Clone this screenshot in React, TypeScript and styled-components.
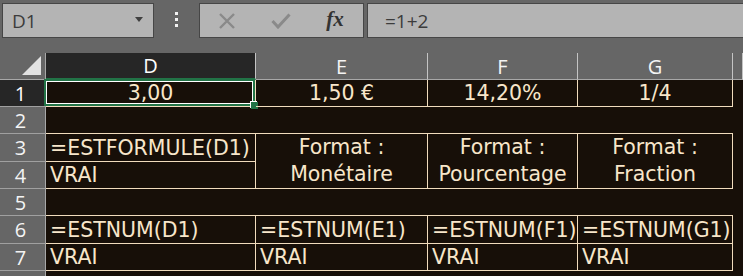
import styled, { createGlobalStyle, css } from "styled-components"

const GlobalStyle = createGlobalStyle`
  html, body {
    margin: 0;
    padding: 0;
    background: #666666;
  }
  body {
    width: 743px;
    height: 276px;
    overflow: hidden;
  }
`

const Window = styled.div`
  width: 743px;
  height: 276px;
  overflow: hidden;
  background: #666666;
  display: flex;
  flex-direction: column;
`

const FormulaBar = styled.div`
  height: 53px;
  flex: none;
  display: flex;
  align-items: flex-start;
  padding: 3px 0 0 2px;
  box-sizing: border-box;
`

const Box = styled.div`
  height: 35px;
  box-sizing: border-box;
  background: #b4b4b4;
  border: 1px solid #464646;
  display: flex;
  align-items: center;
  font-family: "Open Sans", "Liberation Sans", sans-serif;
  font-size: 19px;
  color: #3c3c3c;
`

const NameBox = styled(Box)`
  width: 152px;
  flex: none;
  padding: 0 10px 0 9px;
  justify-content: space-between;
`

const Caret = styled.span`
  width: 0;
  height: 0;
  border-left: 4px solid transparent;
  border-right: 4px solid transparent;
  border-top: 5px solid #404040;
  margin-top: -3px;
`

const Grip = styled.div`
  width: 45px;
  flex: none;
  display: flex;
  flex-direction: column;
  align-items: center;
  gap: 3px;
  padding-top: 9px;
`

const GripDot = styled.span`
  width: 3px;
  height: 3px;
  background: #f2f2f2;
`

const ButtonsBox = styled(Box)`
  width: 165px;
  flex: none;
  padding-left: 0;
`

const BarButton = styled.div`
  width: 54px;
  height: 100%;
  display: flex;
  align-items: center;
  justify-content: center;
`

const Fx = styled.span`
  font-family: "Liberation Serif", "DejaVu Serif", serif;
  font-style: italic;
  font-weight: bold;
  font-size: 21px;
  color: #333333;
  margin-top: -2px;
`

const InputBox = styled(Box)`
  flex: 1;
  margin-left: 3px;
  margin-right: -6px;
  padding-left: 17px;
`

const Sheet = styled.div`
  display: grid;
  grid-template-columns: 46px 210px 172px 150px 155px 1fr;
  grid-template-rows: 27px 27px 27px 28px 27px 27px 28px 27px 20px;
  background: #170f08;
  flex: 1;
  overflow: hidden;
`

const HeaderBase = styled.div`
  display: flex;
  align-items: center;
  justify-content: center;
  box-sizing: border-box;
  background: #666666;
  color: #f4f4f4;
  font-family: "Open Sans", "Liberation Sans", sans-serif;
  font-size: 20px;
`

const Corner = styled(HeaderBase)`
  justify-content: flex-end;
  align-items: flex-end;
  padding: 0 4px 4px 0;
  border-right: 1px solid #a8a8a8;
  border-bottom: 1px solid #a8a8a8;
`

const ColHeader = styled(HeaderBase)<{ $active?: boolean }>`
  border-right: 1px solid #c4c4c4;
  border-bottom: 1px solid #a8a8a8;
  ${(p) =>
    p.$active &&
    css`
      background: #262626;
      color: #ffffff;
      border-bottom: 2px solid #217346;
    `}
`

const RowHeader = styled(HeaderBase)<{ $active?: boolean }>`
  border-right: 1px solid #a8a8a8;
  border-bottom: 1px solid #a0a0a0;
  padding-right: 4px;
  ${(p) =>
    p.$active &&
    css`
      background: #262626;
      color: #ffffff;
    `}
`

const lineColor = "#f1dcbd"

const Cell = styled.div<{
  $right?: boolean
  $bottom?: boolean
  $align?: "left" | "center"
  $span?: number
}>`
  position: relative;
  box-sizing: border-box;
  display: flex;
  align-items: center;
  justify-content: ${(p) => (p.$align === "center" ? "center" : "flex-start")};
  padding: 0 4px;
  font-family: "DejaVu Sans", Verdana, sans-serif;
  font-size: 20.5px;
  color: #f8e6ca;
  white-space: nowrap;
  border-right: ${(p) => (p.$right ? `1px solid ${lineColor}` : "none")};
  border-bottom: ${(p) => (p.$bottom ? `1px solid ${lineColor}` : "none")};
  ${(p) => p.$span && `grid-row: span ${p.$span};`}
`

const Stacked = styled.div`
  display: flex;
  flex-direction: column;
  align-items: center;
  line-height: 27px;
  margin-top: -1px;
`

const Selection = styled.div`
  position: absolute;
  left: -2px;
  top: -1px;
  right: 0;
  bottom: 0;
  border: 2px solid #217346;
  box-shadow: inset 0 0 0 1px #ffffff;
  pointer-events: none;
`

const FillHandle = styled.span`
  position: absolute;
  right: -3px;
  bottom: -3px;
  width: 7px;
  height: 7px;
  background: #217346;
  box-shadow: -1px -1px 0 #ffffff;
`

const columns = ["D", "E", "F", "G", ""]

const Triangle = () => (
  <svg width="19" height="19" viewBox="0 0 19 19" aria-hidden="true">
    <polygon points="19,0 19,19 0,19" fill="#e2e2e2" />
  </svg>
)

const CancelIcon = () => (
  <svg width="18" height="18" viewBox="0 0 18 18" aria-hidden="true">
    <path d="M2 2 L16 16 M16 2 L2 16" stroke="#8a8a8a" strokeWidth="2.4" fill="none" />
  </svg>
)

const EnterIcon = () => (
  <svg width="20" height="16" viewBox="0 0 20 16" aria-hidden="true">
    <path d="M1.5 8 L7 14 L18.5 1.5" stroke="#8a8a8a" strokeWidth="3" fill="none" />
  </svg>
)

export default function App() {
  return (
    <Window>
      <GlobalStyle />
      <FormulaBar>
        <NameBox>
          <span>D1</span>
          <Caret />
        </NameBox>
        <Grip>
          <GripDot />
          <GripDot />
          <GripDot />
        </Grip>
        <ButtonsBox>
          <BarButton>
            <CancelIcon />
          </BarButton>
          <BarButton>
            <EnterIcon />
          </BarButton>
          <BarButton>
            <Fx>fx</Fx>
          </BarButton>
        </ButtonsBox>
        <InputBox>=1+2</InputBox>
      </FormulaBar>

      <Sheet>
        <Corner>
          <Triangle />
        </Corner>
        {columns.map((c, i) => (
          <ColHeader key={i} $active={c === "D"}>
            {c}
          </ColHeader>
        ))}

        <RowHeader $active>1</RowHeader>
        <Cell $right $bottom $align="center">
          3,00
          <Selection />
          <FillHandle />
        </Cell>
        <Cell $right $bottom $align="center">1,50 €</Cell>
        <Cell $right $bottom $align="center">14,20%</Cell>
        <Cell $right $bottom $align="center">1/4</Cell>
        <Cell />

        <RowHeader>2</RowHeader>
        <Cell $bottom />
        <Cell $bottom />
        <Cell $bottom />
        <Cell $bottom />
        <Cell />

        <RowHeader>3</RowHeader>
        <Cell $right $bottom>=ESTFORMULE(D1)</Cell>
        <Cell $right $bottom $align="center" $span={2}>
          <Stacked>
            <span>Format :</span>
            <span>Monétaire</span>
          </Stacked>
        </Cell>
        <Cell $right $bottom $align="center" $span={2}>
          <Stacked>
            <span>Format :</span>
            <span>Pourcentage</span>
          </Stacked>
        </Cell>
        <Cell $right $bottom $align="center" $span={2}>
          <Stacked>
            <span>Format :</span>
            <span>Fraction</span>
          </Stacked>
        </Cell>
        <Cell />

        <RowHeader>4</RowHeader>
        <Cell $right $bottom>VRAI</Cell>
        <Cell />

        <RowHeader>5</RowHeader>
        <Cell $bottom />
        <Cell $bottom />
        <Cell $bottom />
        <Cell $bottom />
        <Cell />

        <RowHeader>6</RowHeader>
        <Cell $right $bottom>=ESTNUM(D1)</Cell>
        <Cell $right $bottom>=ESTNUM(E1)</Cell>
        <Cell $right $bottom>=ESTNUM(F1)</Cell>
        <Cell $right $bottom>=ESTNUM(G1)</Cell>
        <Cell />

        <RowHeader>7</RowHeader>
        <Cell $right $bottom>VRAI</Cell>
        <Cell $right $bottom>VRAI</Cell>
        <Cell $right $bottom>VRAI</Cell>
        <Cell $right $bottom>VRAI</Cell>
        <Cell />

        <RowHeader />
        <Cell />
        <Cell />
        <Cell />
        <Cell />
        <Cell />
      </Sheet>
    </Window>
  )
}
